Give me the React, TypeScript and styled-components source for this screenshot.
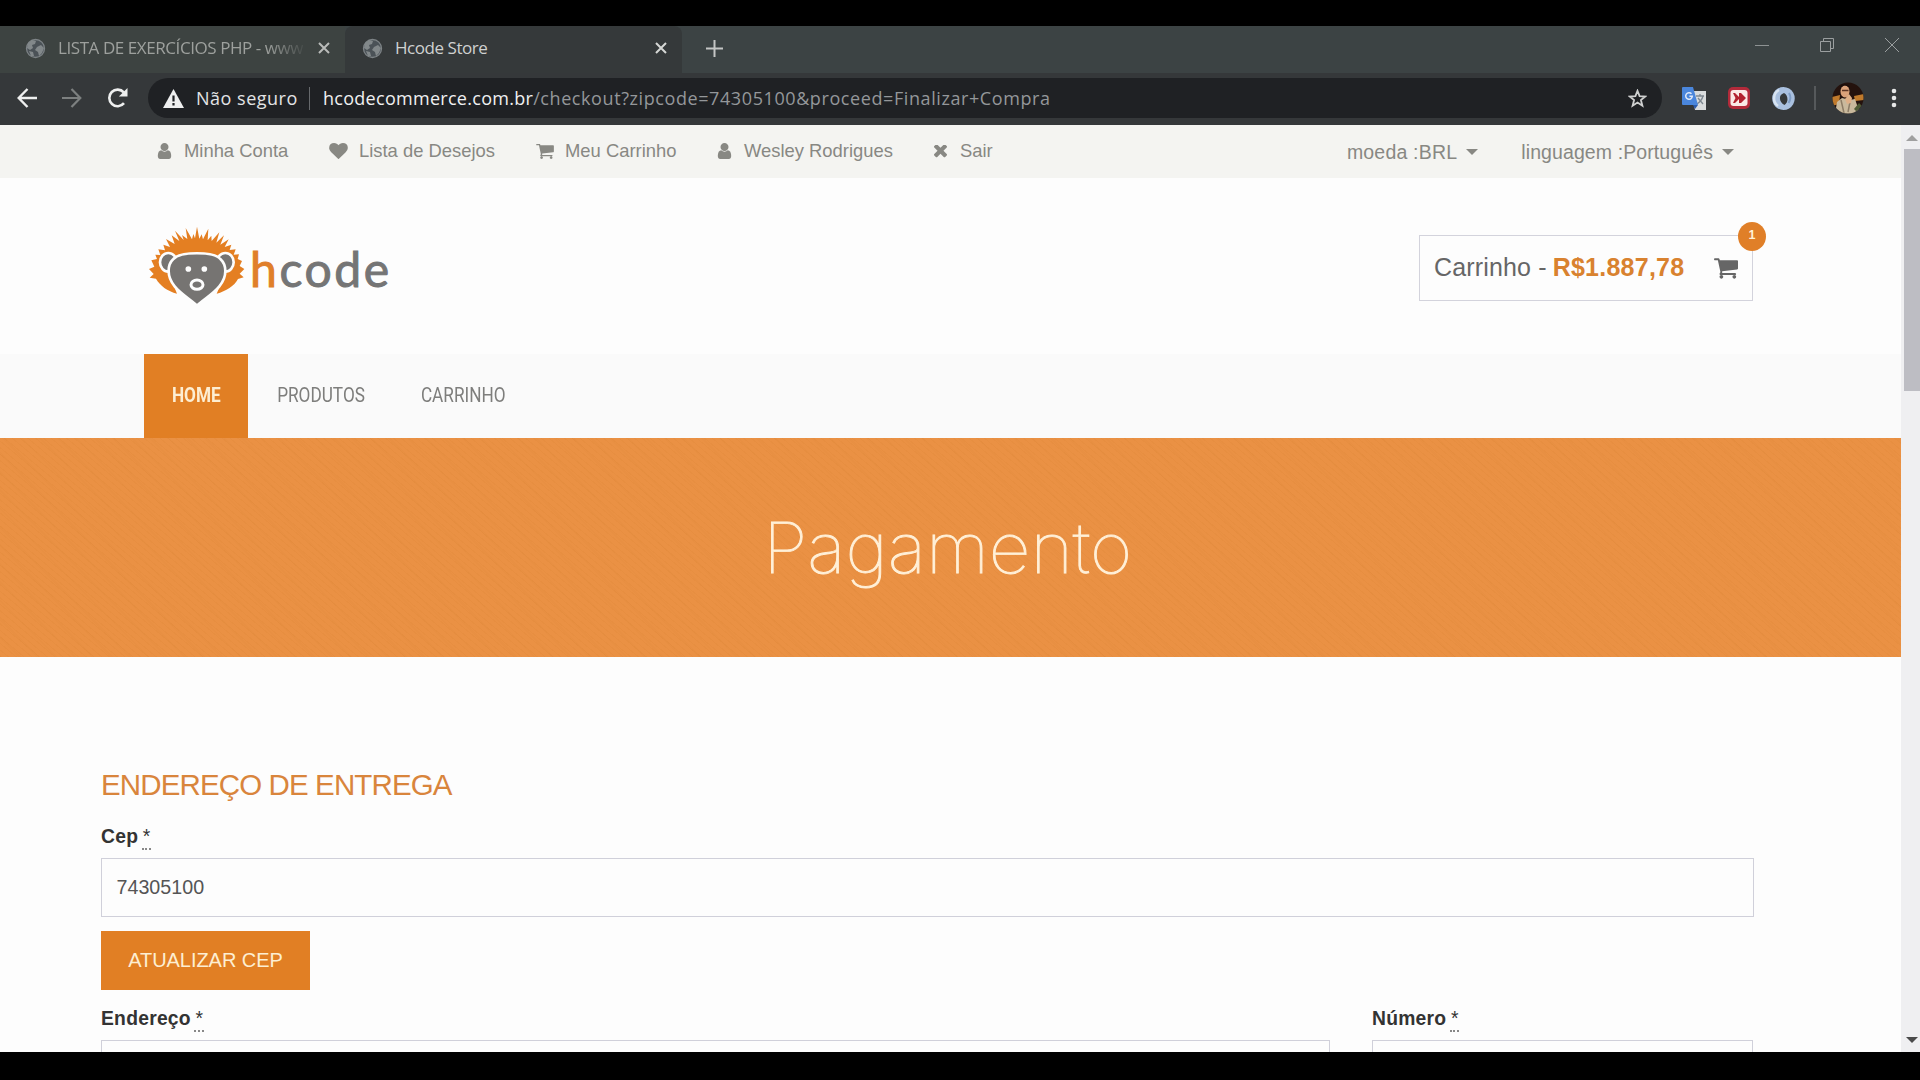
import React from "react";
import styled, { createGlobalStyle } from "styled-components";

const GlobalStyle = createGlobalStyle`
  * { box-sizing: border-box; }
  body { margin: 0; background: #000; overflow: hidden; }
  svg { display: block; flex: none; }
`;

const sans = `"Liberation Sans", Arial, sans-serif`;
const ui = `"Open Sans", "Noto Sans", sans-serif`;

const Screen = styled.div`
  width: 1920px;
  height: 1080px;
  padding: 26px 0 28px;
  display: flex;
  flex-direction: column;
  background: #000;
  overflow: hidden;
`;

/* Browser chrome */

const TabStrip = styled.div`
  height: 47px;
  flex: none;
  display: flex;
  background: #3c4344;
`;

const Tab = styled.div<{ $active?: boolean; $width: number }>`
  width: ${(p) => p.$width}px;
  height: 47px;
  display: flex;
  align-items: center;
  padding: 0 13px 3px ${(p) => (p.$active ? 17 : 25)}px;
  background: ${(p) => (p.$active ? "#35393a" : "#3d4341")};
  border-radius: ${(p) => (p.$active ? "8px 8px 0 0" : "0")};
`;

const TabTitle = styled.span<{ $active?: boolean; $spacing: number }>`
  flex: 1;
  margin-left: 12px;
  white-space: nowrap;
  font: 17px/24px ${ui};
  letter-spacing: ${(p) => p.$spacing}px;
  color: ${(p) => (p.$active ? "#cfd1d0" : "#9da09d")};
  ${(p) => !p.$active && "mask-image: linear-gradient(90deg, #000 85%, transparent 102%);"}
`;

const TabClose = styled.div`
  margin: 0 2px 0 15px;
`;

const NewTab = styled.div`
  padding: 13px 0 0 23px;
`;

const WindowControls = styled.div`
  margin-left: auto;
  display: flex;
  gap: 49px;
  padding: 11px 20px 0 0;
`;

const Toolbar = styled.div`
  height: 52px;
  flex: none;
  display: flex;
  align-items: center;
  padding: 0 17px 2px;
  background: #35383a;
`;

const NavButtons = styled.div`
  display: flex;
  gap: 25px;
  width: 131px;
`;

const AddressBar = styled.div`
  width: 1514px;
  height: 40px;
  border-radius: 20px;
  display: flex;
  align-items: center;
  padding: 0 15px 0 15px;
  background: #1f2124;
  font: 18px/26px ${ui};
  white-space: nowrap;
`;

const Warning = styled.span`
  margin-left: 12px;
  width: 113px;
  color: #e3e4e5;
  letter-spacing: 0.5px;
`;

const AddressRule = styled.span`
  width: 1px;
  height: 23px;
  background: #66696c;
  margin-right: 13px;
`;

const Host = styled.span`
  color: #eff0f1;
  letter-spacing: 0.28px;
`;

const Path = styled.span`
  color: #94979a;
  letter-spacing: 0.59px;
  flex: 1;
`;

const Extensions = styled.div`
  display: flex;
  align-items: center;
  padding-left: 20px;
`;

const Extension = styled.div`
  margin-right: 21px;
`;

const ToolRule = styled.span`
  width: 2px;
  height: 24px;
  margin: 0 16px 0 -2px;
  background: #56595b;
`;

const MenuDots = styled.div`
  margin-left: 27px;
`;

/* Page */

const Viewport = styled.div`
  flex: 1;
  min-height: 0;
  display: flex;
  background: #fdfdfd;
`;

const Page = styled.main`
  width: 1901px;
  overflow: hidden;
`;

const TopBar = styled.div`
  height: 53px;
  display: flex;
  padding: 13px 167px 0 157px;
  justify-content: space-between;
  background: #f4f4f1;
  color: #888883;
  font-family: ${sans};
`;

const Links = styled.div`
  display: flex;
  gap: 41px;
`;

const TopLink = styled.a<{ $slot: number; $width: number; $spacing?: number }>`
  display: grid;
  grid-template-columns: ${(p) => p.$slot}px ${(p) => p.$width}px;
  align-items: center;
  height: 26px;
  font-size: 18.4px;
  letter-spacing: ${(p) => p.$spacing ?? 0}px;
  white-space: nowrap;
`;

const Selectors = styled.div`
  display: flex;
  gap: 43px;
`;

const Selector = styled.div<{ $spacing: number }>`
  display: flex;
  align-items: center;
  gap: 9px;
  height: 28px;
  font-size: 19.5px;
  letter-spacing: ${(p) => p.$spacing}px;
  white-space: nowrap;
`;

const Caret = styled.i`
  border: 6px solid transparent;
  border-top-color: #888883;
  border-bottom: 0;
`;

const Header = styled.header`
  height: 176px;
  display: flex;
  justify-content: space-between;
  align-items: flex-start;
  padding: 48px 148px 0 148px;
`;

const Logo = styled.div`
  display: flex;
`;

const Wordmark = styled.span`
  margin: 14px 0 0 4px;
  font: 400 48px/58px Lato, sans-serif;
  letter-spacing: 2.6px;
  color: #757575;
  -webkit-text-stroke: 1px currentColor;
  b { font-weight: 400; color: #e07f2a; }
`;

const Cart = styled.div`
  position: relative;
  width: 334px;
  height: 66px;
  margin-top: 9px;
  padding: 0 14px;
  border: 1px solid #d3d3dc;
  display: flex;
  align-items: center;
  font: 25px/30px ${sans};
  letter-spacing: 0.15px;
  color: #666;
  white-space: nowrap;
`;

const CartTotal = styled.b`
  margin: -2px 0 0 6px;
  flex: 1;
  color: #d9822f;
  letter-spacing: 0.25px;
`;

const CartText = styled.span`
  margin-top: -2px;
`;

const CartBadge = styled.span`
  position: absolute;
  top: -14px;
  right: -14px;
  width: 28px;
  height: 29px;
  border-radius: 50%;
  background: #e07f28;
  color: #fff2d8;
  font: bold 12.5px/26px ${sans};
  letter-spacing: 0;
  text-align: center;
`;

const Menu = styled.nav`
  height: 84px;
  display: flex;
  padding-left: 144px;
  background: #fafafa;
`;

const MenuItem = styled.a<{ $active?: boolean; $width: number; $squeeze: number }>`
  width: ${(p) => p.$width}px;
  display: flex;
  justify-content: center;
  align-items: center;
  padding-bottom: 2px;
  background: ${(p) => (p.$active ? "#e17f24" : "none")};
  color: ${(p) => (p.$active ? "#fdeed2" : "#7e7e7c")};
  font: ${(p) => (p.$active ? 700 : 400)} 20px/24px Roboto, sans-serif;
  span { transform: scaleX(${(p) => p.$squeeze}); }
`;

const Banner = styled.section`
  height: 219px;
  display: flex;
  align-items: center;
  justify-content: center;
  padding: 0 5px 0 0;
  background:
    repeating-linear-gradient(40deg, rgba(205, 120, 35, 0.1) 0 1px, transparent 1px 5px),
    repeating-linear-gradient(45deg, rgba(200, 120, 40, 0.06) 0 2px, transparent 2px 13px),
    #ea9144;
`;

const Title = styled.h1`
  margin: 0;
  font: 100 70px/86px Inter, Lato, sans-serif;
  color: #fff0d8;
  -webkit-text-stroke: 0.9px currentColor;
  transform: scaleX(1.038);
`;

const Form = styled.form`
  padding: 110px 147px 0 101px;
  font-family: ${sans};
`;

const Legend = styled.h3`
  margin: 0 0 15px;
  height: 36px;
  font: 400 29.5px/36px ${sans};
  letter-spacing: -0.87px;
  color: #d9853c;
  white-space: nowrap;
`;

const Label = styled.label`
  display: block;
  height: 40px;
  padding-top: 7px;
  font-size: 19.3px;
  line-height: 24px;
  letter-spacing: 0.25px;
  font-weight: 700;
  color: #333;
  abbr {
    font-weight: 400;
    display: inline-block;
    height: 25px;
    margin-left: -2px;
    padding: 0 1px;
    letter-spacing: 0;
    border-bottom: 2px dotted #888;
  }
`;

const Input = styled.div`
  height: 59px;
  padding: 0 14.5px;
  border: 1px solid #d0d0da;
  font-size: 19.7px;
  line-height: 56px;
  color: #555;
`;

const Button = styled.button`
  display: block;
  width: 209px;
  height: 59px;
  margin: 14px 0 10px;
  padding: 0;
  border: 0;
  background: #e17f24;
  color: #fdeed2;
  font: 20px/59px ${sans};
  letter-spacing: -0.05px;
`;

const Row = styled.div`
  display: grid;
  grid-template-columns: 1229px 381px;
  column-gap: 42px;
`;

const Scrollbar = styled.div`
  width: 19px;
  display: flex;
  flex-direction: column;
  align-items: center;
  background: #efeff1;
`;

const Arrow = styled.i<{ $down?: boolean }>`
  border: 6px solid transparent;
  ${(p) =>
    p.$down
      ? "border-top-color: #4a4a4a; border-bottom: 0; margin: auto 0 9px 3px;"
      : "border-bottom-color: #a0a0a0; border-top: 0; margin: 10px 0 8px 3px;"}
`;

const Thumb = styled.div`
  width: 16px;
  height: 242px;
  margin-left: 2px;
  background: #bdbdc3;
`;

/* Icons */

const paths = {
  user: {
    box: "256 128 1280 1536",
    d: "M1536 1399q0 109-62.5 187t-150.5 78h-854q-88 0-150.5-78t-62.5-187q0-85 8.5-160.5t31.5-152 58.5-131 94-89 134.5-34.5q131 128 313 128t313-128q76 0 134.5 34.5t94 89 58.5 131 31.5 152 8.5 160.5zm-256-887q0 159-112.5 271.5t-271.5 112.5-271.5-112.5-112.5-271.5 112.5-271.5 271.5-112.5 271.5 112.5 112.5 271.5z",
  },
  heart: {
    box: "0 128 1792 1536",
    d: "M896 1664q-26 0-44-18l-624-602q-10-8-27.5-26t-55.5-65.5-68-97.5-53.5-121-23.5-138q0-220 127-344t351-124q62 0 126.5 21.5t120 58 95.5 68.5 76 68q36-36 76-68t95.5-68.5 120-58 126.5-21.5q224 0 351 124t127 344q0 221-229 450l-623 600q-18 18-44 18z",
  },
  cart: {
    box: "64 256 1664 1408",
    d: "M704 1536q0 52-38 90t-90 38-90-38-38-90 38-90 90-38 90 38 38 90zm896 0q0 52-38 90t-90 38-90-38-38-90 38-90 90-38 90 38 38 90zm128-1088v512q0 24-16.5 42.5t-40.5 21.5l-1044 122q13 60 13 70 0 16-24 64h920q26 0 45 19t19 45-19 45-45 19h-1024q-26 0-45-19t-19-45q0-11 8-31.5t16-36 21.5-40 15.5-29.5l-177-823h-204q-26 0-45-19t-19-45 19-45 45-19h256q16 0 28.5 6.5t19.5 15.5 13 24.5 8 26 5.5 29.5 4.5 26h1201q26 0 45 19t19 45z",
  },
  times: {
    box: "302 430 1188 1188",
    d: "M1490 1322q0 40-28 68l-136 136q-28 28-68 28t-68-28l-294-294-294 294q-28 28-68 28t-68-28l-136-136q-28-28-28-68t28-68l294-294-294-294q-28-28-28-68t28-68l136-136q28-28 68-28t68 28l294 294 294-294q28-28 68-28t68 28l136 136q28 28 28 68t-28 68l-294 294 294 294q28 28 28 68z",
  },
};

const Glyph = ({ name, w, h }: { name: keyof typeof paths; w: number; h: number }) => (
  <svg width={w} height={h} viewBox={paths[name].box} fill="currentColor">
    <path d={paths[name].d} />
  </svg>
);

const Globe = () => (
  <svg width="21" height="21" viewBox="0 0 21 21">
    <circle cx="10.5" cy="10.5" r="9" fill="#4b5257" stroke="#7d8386" strokeWidth="1.3" />
    <path d="M3 5l4-3 4 1-1 3-3 1 1 3-3 2-3-2zM12 9l4-2 3 3-2 5-3 3-1-4-3-2zM4 13l4 1 1 4-3 0z" fill="#82888a" />
  </svg>
);

const Cross = ({ size, color, width }: { size: number; color: string; width: number }) => (
  <svg width={size} height={size} viewBox={`0 0 ${size} ${size}`} stroke={color} strokeWidth={width}>
    <path d={`M1 1L${size - 1} ${size - 1}M${size - 1} 1L1 ${size - 1}`} />
  </svg>
);

const Hedgehog = () => (
  <svg width="98" height="79" viewBox="53 48 294 237">
    <path
      fill="#e47f22"
      d="M140 251C112 244 88 226 77 206L58 203L70 192L56 177L72 170L63 151L80 147L75 134L90 135L84 118L104 121L99 104L119 111L107 87L133 102L124 76L147 93L134 62L160 90L155 75L171 87L166 54L185 88L189 72L194 85L200 50L207 86L214 73L218 88L234 56L232 91L243 77L244 93L267 67L258 98L281 76L270 104L295 88L283 111L303 104L298 120L316 118L310 134L326 133L322 147L335 153L328 168L342 177L328 191L340 202L323 207C312 228 287 244 259 251L280 200L275 150L200 128L125 150L120 200Z"
    />
    <g fill="#767472" stroke="#fdfdfd" strokeWidth="8">
      <ellipse cx="114" cy="157" rx="25" ry="28" />
      <ellipse cx="285" cy="157" rx="25" ry="28" />
      <path d="M200 287C181 268 152 253 133 229C108 199 111 164 129 147C150 124 250 124 270 147C289 164 292 199 267 229C248 253 219 268 200 287Z" />
    </g>
    <circle cx="174" cy="177" r="8.500" fill="#fdfdfd" />
    <circle cx="222" cy="177" r="8.500" fill="#fdfdfd" />
    <ellipse cx="200" cy="224" rx="18" ry="14" fill="#767472" stroke="#fdfdfd" strokeWidth="9" />
  </svg>
);

const Field = ({ label, value }: { label: string; value?: string }) => (
  <div>
    <Label>
      {label} <abbr>*</abbr>
    </Label>
    <Input>{value}</Input>
  </div>
);

export default function App() {
  return (
    <Screen>
      <GlobalStyle />
      <TabStrip>
        <Tab $width={345}>
          <Globe />
          <TabTitle $spacing={-0.43}>LISTA DE EXERCÍCIOS PHP - www</TabTitle>
          <TabClose>
            <Cross size={12} color="#b9bbb9" width={2} />
          </TabClose>
        </Tab>
        <Tab $width={337} $active>
          <Globe />
          <TabTitle $spacing={-0.45} $active>Hcode Store</TabTitle>
          <TabClose>
            <Cross size={12} color="#d5d7d5" width={2} />
          </TabClose>
        </Tab>
        <NewTab>
          <svg width="19" height="19" viewBox="0 0 19 19" stroke="#c4c6c5" strokeWidth="2">
            <path d="M9.500 1V18M1 9.500H18" />
          </svg>
        </NewTab>
        <WindowControls>
          <svg width="16" height="16" viewBox="0 0 16 16" stroke="#8e9293">
            <path d="M1 8.500H15" />
          </svg>
          <svg width="16" height="16" viewBox="0 0 16 16" fill="none" stroke="#9b9fa0">
            <path d="M1.500 4.500H11.500V14.500H1.500ZM4.500 4.500V1.500H14.500V11.500H11.500" />
          </svg>
          <Cross size={16} color="#9b9fa0" width={1} />
        </WindowControls>
      </TabStrip>

      <Toolbar>
        <NavButtons>
          <svg width="20" height="20" viewBox="0 0 20 20" fill="none" stroke="#eeefef" strokeWidth="2.400">
            <path d="M20 10H2M10.500 1L1.700 10L10.500 19" />
          </svg>
          <svg width="20" height="20" viewBox="0 0 20 20" fill="none" stroke="#7d8080" strokeWidth="2.200">
            <path d="M0 10H18M9.500 1L18.300 10L9.500 19" />
          </svg>
          <svg width="21" height="20" viewBox="0 0 21 20">
            <path d="M17 15.200A8.300 8.300 0 1 1 16.800 4.400" fill="none" stroke="#eeefef" strokeWidth="2.600" />
            <path d="M20.500 0V8.600H11.900Z" fill="#eeefef" />
          </svg>
        </NavButtons>
        <AddressBar>
          <svg width="21" height="19" viewBox="0 0 21 19">
            <path d="M10.500 0L21 19H0Z" fill="#eeefef" />
            <path d="M10.500 6.500V12.500M10.500 14V16.500" stroke="#1f2124" strokeWidth="2.200" />
          </svg>
          <Warning>Não seguro</Warning>
          <AddressRule />
          <Host>hcodecommerce.com.br</Host>
          <Path>/checkout?zipcode=74305100&amp;proceed=Finalizar+Compra</Path>
          <svg width="19" height="19" viewBox="0 0 19 19" fill="none" stroke="#cfd0d0" strokeWidth="1.800">
            <path d="M9.500 1.800L11.600 7.200L17.300 7.500L12.900 11.100L14.400 16.700L9.500 13.600L4.600 16.700L6.100 11.100L1.700 7.500L7.400 7.200Z" />
          </svg>
        </AddressBar>
        <Extensions>
          <Extension>
            <svg width="24" height="23" viewBox="0 0 24 23">
              <path d="M9 4H24V23H13Z" fill="#d9dcdd" />
              <path d="M14 9H22M18 7V9M21 9C20 13 18 15 15 17M16 11L21 17" stroke="#7d8790" strokeWidth="1.300" fill="none" />
              <path d="M1 0H11L16 18H1Q0 18 0 17V1Q0 0 1 0Z" fill="#4a86dc" />
              <path d="M11 18H16L13 22Z" fill="#2d5cab" />
              <path d="M9.500 6.800A3.300 3.300 0 1 0 10.300 9.300H7.400" fill="none" stroke="#dfe9f8" strokeWidth="1.500" />
            </svg>
          </Extension>
          <Extension>
            <svg width="24" height="24" viewBox="0 0 24 24">
              <rect x="1" y="1" width="22" height="22" rx="5" fill="#b32a3a" />
              <rect x="3.500" y="4" width="17" height="16" rx="3" fill="#fbe9e6" />
              <path d="M6 7H8L12 11V7H14L19 12L14 17H12V13L8 17H6L8.500 12Z" fill="#b3222f" />
            </svg>
          </Extension>
          <Extension>
            <svg width="23" height="23" viewBox="0 0 23 23">
              <path
                fillRule="evenodd"
                d="M11.500 0A11.300 11.500 0 1 1 11.400 0ZM12 6C6 8 7 15 12.500 18C17 15 16 8 12 6Z"
                fill="#a9c0df"
              />
              <path d="M7 3A9.500 9.500 0 0 0 6 19" fill="none" stroke="#d8e4f2" strokeWidth="2.500" />
              <path d="M17 6Q20 11 16.500 16" fill="none" stroke="#7f9dc6" strokeWidth="2" />
            </svg>
          </Extension>
          <ToolRule />
          <svg width="32" height="32" viewBox="0 0 32 32">
            <defs>
              <clipPath id="avatar">
                <circle cx="16" cy="16" r="15.500" />
              </clipPath>
            </defs>
            <g clipPath="url(#avatar)">
              <rect width="32" height="32" fill="#24120d" />
              <path d="M0 15L8 13L7 22L0 24ZM22 14L32 12V18L23 19Z" fill="#c07a2c" />
              <path d="M3 32L5 20L10 16L18 18L23 17L28 32Z" fill="#c9b99c" />
              <path d="M9 18L12 31M18 20L16 30" stroke="#8d7d66" strokeWidth="1.500" />
              <ellipse cx="13" cy="9.500" rx="4.500" ry="6" fill="#dba27a" />
              <path d="M8 7Q12 0 18 6L17 4Q12 0 8 4Z" fill="#1b0d0a" />
              <path d="M10 8.500H16.500" stroke="#5b3424" strokeWidth="1.500" />
              <path d="M13 17L17 12L20 16L19 21L15 22Z" fill="#dfb088" />
              <path d="M22 27L27 21L30 24L26 31Z" fill="#4f5b35" />
            </g>
          </svg>
          <MenuDots>
            <svg width="6" height="22" viewBox="0 0 6 22" fill="#e6e7e7">
              <circle cx="3" cy="4" r="2.300" />
              <circle cx="3" cy="11" r="2.300" />
              <circle cx="3" cy="18" r="2.300" />
            </svg>
          </MenuDots>
        </Extensions>
      </Toolbar>

      <Viewport>
        <Page>
          <TopBar>
            <Links>
              <TopLink $slot={27} $width={104}><Glyph name="user" w={15} h={16} />Minha Conta</TopLink>
              <TopLink $slot={30} $width={136}><Glyph name="heart" w={19} h={16} />Lista de Desejos</TopLink>
              <TopLink $slot={29} $width={111}><Glyph name="cart" w={18} h={15} />Meu Carrinho</TopLink>
              <TopLink $slot={27} $width={149}><Glyph name="user" w={15} h={16} />Wesley Rodrigues</TopLink>
              <TopLink $slot={26} $width={33}><Glyph name="times" w={13} h={13} />Sair</TopLink>
            </Links>
            <Selectors>
              <Selector $spacing={0.2}>moeda :BRL<Caret /></Selector>
              <Selector $spacing={0.1}>linguagem :Português<Caret /></Selector>
            </Selectors>
          </TopBar>

          <Header>
            <Logo>
              <Hedgehog />
              <Wordmark><b>h</b>code</Wordmark>
            </Logo>
            <Cart>
              <CartText>Carrinho -</CartText>
              <CartTotal>R$1.887,78</CartTotal>
              <Glyph name="cart" w={24} h={21} />
              <CartBadge>1</CartBadge>
            </Cart>
          </Header>

          <Menu>
            <MenuItem $active $width={104} $squeeze={0.86}><span>HOME</span></MenuItem>
            <MenuItem $width={146} $squeeze={0.86}><span>PRODUTOS</span></MenuItem>
            <MenuItem $width={138} $squeeze={0.86}><span>CARRINHO</span></MenuItem>
          </Menu>

          <Banner>
            <Title>Pagamento</Title>
          </Banner>

          <Form>
            <Legend>ENDEREÇO DE ENTREGA</Legend>
            <Field label="Cep" value="74305100" />
            <Button type="button">ATUALIZAR CEP</Button>
            <Row>
              <Field label="Endereço" />
              <Field label="Número" />
            </Row>
          </Form>
        </Page>
        <Scrollbar>
          <Arrow />
          <Thumb />
          <Arrow $down />
        </Scrollbar>
      </Viewport>
    </Screen>
  );
}
